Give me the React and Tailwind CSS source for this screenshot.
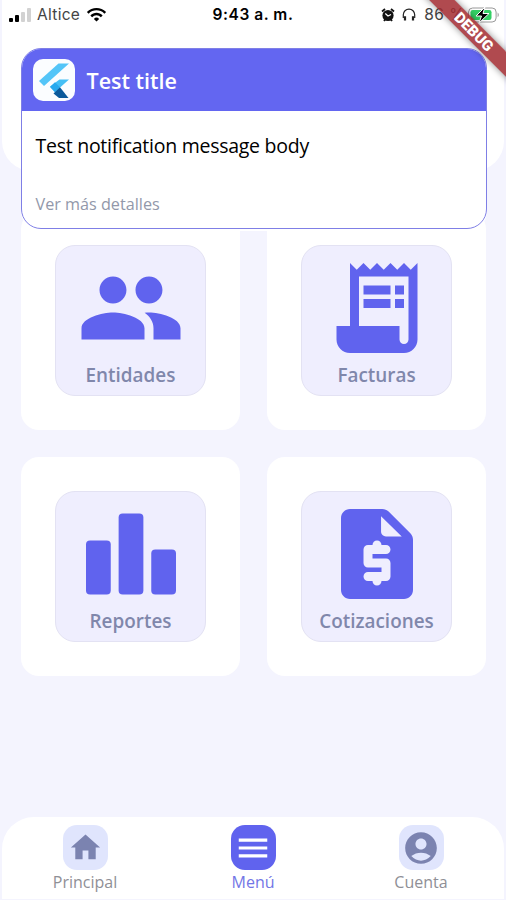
import { MdPeople, MdHome, MdMenu, MdAccountCircle, MdWifi } from 'react-icons/md';

function ReceiptIcon({ className }) {
  return (
    <svg viewBox="0 0 24 24" fill="currentColor" className={className}>
      <path d="M19.5 3.5 18 2l-1.5 1.5L15 2l-1.5 1.5L12 2l-1.5 1.5L9 2 7.5 3.5 6 2v14H3v3c0 1.66 1.34 3 3 3h12c1.66 0 3-1.34 3-3V2l-1.5 1.5zM19 19c0 .55-.45 1-1 1s-1-.45-1-1v-3H8V5h11v14z" />
      <path d="M9 7h6v2H9zM16 7h2v2h-2zM9 10h6v2H9zM16 10h2v2h-2z" />
    </svg>
  );
}

function BarsIcon({ className }) {
  return (
    <svg viewBox="0 0 24 24" fill="currentColor" className={className}>
      <rect x="2" y="9" width="5.5" height="12" rx="0.9" />
      <rect x="9.25" y="3" width="5.5" height="18" rx="0.9" />
      <rect x="16.5" y="11" width="5.5" height="10" rx="0.9" />
    </svg>
  );
}

function QuoteIcon({ className }) {
  return (
    <svg viewBox="0 0 24 24" fill="currentColor" fillRule="evenodd" className={className}>
      <path d="M19.41 7.41l-4.83-4.83C14.21 2.21 13.7 2 13.17 2H6c-1.1 0-2 .9-2 2v16c0 1.1.9 2 2 2h12c1.1 0 2-.9 2-2V8.83c0-.53-.21-1.04-.59-1.42zM14 8.1c-.6 0-1.1-.5-1.1-1.1V3.6l4.6 4.5zM14 12h-3v1h3c.55 0 1 .45 1 1v3c0 .55-.45 1-1 1h-1c0 .55-.45 1-1 1s-1-.45-1-1h-1c-.55 0-1-.45-1-1s.45-1 1-1h3v-1h-3c-.55 0-1-.45-1-1v-3c0-.55.45-1 1-1h1c0-.55.45-1 1-1s1 .45 1 1h1c.55 0 1 .45 1 1s-.45 1-1 1z" />
    </svg>
  );
}

function FlutterLogo() {
  return (
    <svg viewBox="0 0 42 42" className="h-[42px] w-[42px]">
      <path d="M25.5 4.5h10.5L11 27l-5-5z" fill="#54c5f8" />
      <path d="M26.5 20.5H36L22 33l-5-5.5z" fill="#45bff5" />
      <path d="M17 28l5-4.7 5 5-5 5z" fill="#29a9ee" />
      <path d="M20.5 34.5l6.5-6.2 8.5 10.7H26z" fill="#0b5a9b" />
    </svg>
  );
}

const tiles = [
  { label: 'Entidades', icon: MdPeople },
  { label: 'Facturas', icon: ReceiptIcon },
  { label: 'Reportes', icon: BarsIcon },
  { label: 'Cotizaciones', icon: QuoteIcon },
];

const tabs = [
  { label: 'Principal', icon: MdHome, size: 'h-[35px] w-[35px]' },
  { label: 'Menú', icon: MdMenu, size: 'h-[38px] w-[38px]', active: true },
  { label: 'Cuenta', icon: MdAccountCircle, size: 'h-[38px] w-[38px]' },
];

function StatusBar() {
  return (
    <div className="grid h-[29px] grid-cols-3 items-center pl-[7px] pr-[4px] font-[Inter,sans-serif] text-[15.5px] leading-none text-[#444]">
      <div className="flex items-center">
        <div className="flex h-[14px] items-end gap-[2px]">
          <span className="h-1 w-[4px] rounded-[1px] bg-black" />
          <span className="h-[7px] w-[4px] rounded-[1px] bg-black" />
          <span className="h-[10px] w-[4px] rounded-[1px] bg-[#d2d2d2]" />
          <span className="h-[14px] w-[4px] rounded-[1px] bg-[#d2d2d2]" />
        </div>
        <span className="ml-[6px] tracking-[0.3px]">Altice</span>
        <MdWifi className="ml-[6px] h-[21px] w-[21px] text-black" />
      </div>
      <div className="-ml-[3px] text-center font-semibold tracking-[0.55px] text-black">9:43 a. m.</div>
      <div className="flex items-center justify-end whitespace-nowrap">
        <svg viewBox="0 0 14 14" className="h-[14px] w-[14px]">
          <circle cx="7" cy="7.5" r="5.6" fill="#111" />
          <path d="M1 3.5 4 1M13 3.5 10 1M3 13l1.5-2M11 13l-1.5-2" stroke="#111" strokeWidth="1.8" />
          <path d="M4.3 5.5 7 8l3-1.5" stroke="#fff" strokeWidth="1.2" fill="none" />
        </svg>
        <svg viewBox="0 0 14 14" className="ml-[7px] h-[14px] w-[14px]" fill="none" stroke="#222">
          <path d="M1.3 10V6.8a5.7 5.7 0 0 1 11.4 0V10" strokeWidth="1.2" />
          <path d="M3 8.2v4.3M11 8.2v4.3" strokeWidth="2.2" />
        </svg>
        <span className="ml-[8px] tracking-[0.5px]">86 %</span>
        <svg viewBox="0 0 32 16" className="ml-[3px] h-4 w-8">
          <rect x="0.6" y="1" width="27.5" height="14" rx="4" fill="#fff" stroke="#999" strokeWidth="1" />
          <rect x="2.5" y="3" width="21" height="10" rx="2.2" fill="#34d065" />
          <path d="M29.6 5.5c1.6.8 1.6 4 0 4.8z" fill="#999" />
          <path d="M17 0 8 9h5.5L11 16l10-9.5h-6z" fill="#000" stroke="#fff" strokeWidth="1" />
        </svg>
      </div>
    </div>
  );
}

function Notification() {
  return (
    <div className="absolute left-[20.5px] top-[47.5px] h-[181px] w-[466px] overflow-hidden rounded-[20px] border-[1.5px] border-[#7f7fe6] bg-white shadow-[0_2px_0_0_#fff]">
      <div className="flex h-[62px] items-center bg-[#6366f1] pl-[11px]">
        <div className="overflow-hidden rounded-[10px] bg-[#fbfdff]">
          <FlutterLogo />
        </div>
        <h2 className="ml-[12px] pt-[2px] text-[21.5px] font-semibold leading-none text-white">Test title</h2>
      </div>
      <p className="pl-[14px] pt-[21.5px] text-[19.5px] leading-[28px] tracking-[-0.26px] text-black">
        Test notification message body
      </p>
      <p className="pl-[14px] pt-[31.5px] text-[16.2px] leading-[24px] text-[#9298aa]">
        Ver más detalles
      </p>
    </div>
  );
}

function DebugBanner() {
  return (
    <div className="absolute right-0 top-0 h-[90px] w-[90px] overflow-hidden">
      <div className="absolute left-[-22px] top-[22.5px] h-[17.5px] w-[160px] rotate-45 bg-[rgba(162,42,48,0.85)] text-center font-[Roboto,sans-serif] text-[15px] font-black leading-[18px] text-white shadow-[0_0_7px_rgba(0,0,0,0.45)]">
        DEBUG
      </div>
    </div>
  );
}

export default function App() {
  return (
    <div className="relative flex h-[900px] w-[506px] flex-col overflow-hidden bg-[#f4f4fe] font-['Open_Sans',sans-serif]">
      <header className="mx-[2px] h-[171px] shrink-0 rounded-b-[30px] bg-white">
        <StatusBar />
      </header>

      <main className="mt-[40px] grid grid-cols-[219px_219px] gap-x-[27px] gap-y-[27px] pl-[21px]">
        {tiles.map((tile) => (
          <div
            key={tile.label}
            className="flex h-[219px] items-center justify-center rounded-[18px] bg-white"
          >
            <div className="flex h-[151px] w-[151px] flex-col items-center rounded-[20px] border border-[#e3e2f3] bg-[#efeefe] pt-[8px]">
              <tile.icon className="h-[108px] w-[108px] shrink-0 text-[#6063ee]" />
              <span className="text-[18.9px] font-semibold leading-[27px] text-[#8087ab]">
                {tile.label}
              </span>
            </div>
          </div>
        ))}
      </main>

      <nav className="mx-[2px] mb-[1px] mt-auto grid h-[82px] grid-cols-[168px_168px_168px] justify-center rounded-t-[32px] bg-white">
        {tabs.map((tab) => (
          <div key={tab.label} className="flex flex-col items-center pt-2">
            <div
              className={`flex h-[45px] w-[45px] items-center justify-center rounded-[14px] ${
                tab.active ? 'bg-[#6063ee] text-white' : 'bg-[#e0e5fd] text-[#7b83b0]'
              }`}
            >
              <tab.icon className={tab.size} />
            </div>
            <span
              className={`text-[16px] leading-[24px] ${tab.active ? 'text-[#7376e6]' : 'text-[#8f8f96]'}`}
            >
              {tab.label}
            </span>
          </div>
        ))}
      </nav>

      <Notification />
      <DebugBanner />
    </div>
  );
}
